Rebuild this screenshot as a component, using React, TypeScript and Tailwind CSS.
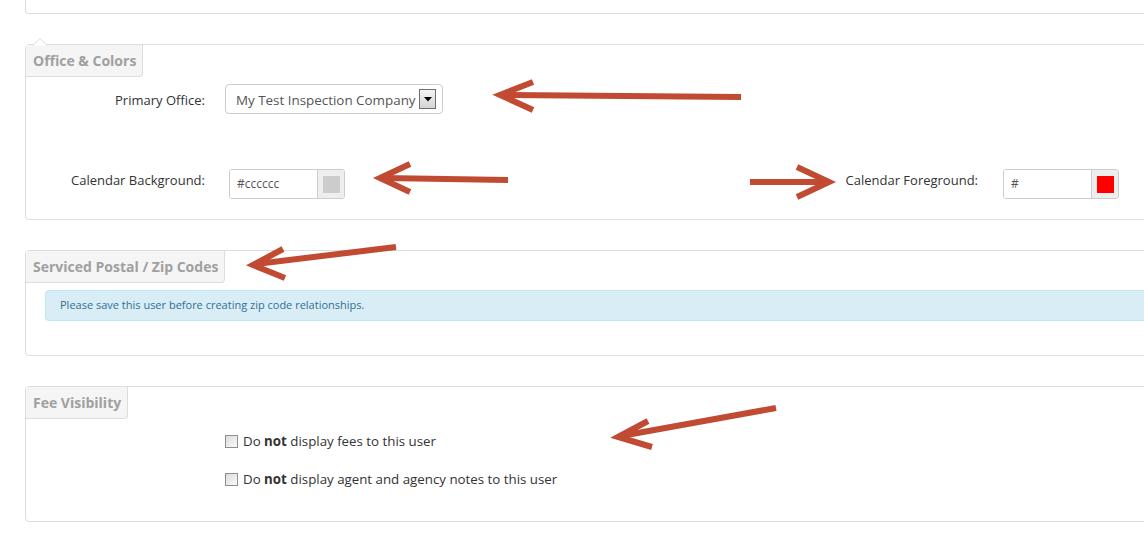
import React from "react";

function Tab(props: { title: string }) {
    return (
        <div className="inline-flex h-[32px] items-center bg-[#f5f5f5] border-r border-b border-[#dddddd] rounded-br-[4px] pl-[7px] pr-[6px] text-[14px] font-bold text-[#a0a0a0]">
            {props.title}
        </div>
    );
}

function ColorInput(props: { value: string; swatch: string }) {
    return (
        <div className="flex h-[30px] w-[116px] border border-[#cccccc] rounded-[3px] overflow-hidden">
            <div className="flex-1 flex items-center pl-[7px] text-[12px] text-[#555555] bg-white">{props.value}</div>
            <div className="w-[27px] border-l border-[#cccccc] bg-[#eeeeee] flex items-center justify-center">
                <span className={"block w-[17px] h-[17px] " + props.swatch}></span>
            </div>
        </div>
    );
}

function Check(props: { children: React.ReactNode }) {
    return (
        <div className="flex items-center ml-[199px] text-[13.3px] text-[#333333]">
            <span className="block w-[13px] h-[13px] border border-[#8e8f8f] bg-gradient-to-br from-[#dcdcdc] to-[#fbfbfb] mr-[5px]"></span>
            <span>{props.children}</span>
        </div>
    );
}

function Arrows() {
    const c = "#c14a33";
    return (
        <svg className="absolute left-0 top-0 pointer-events-none" width="1144" height="549">
            <g stroke={c} strokeWidth="6" fill="none" strokeLinecap="butt" strokeLinejoin="miter">
                <path d="M741 97 L503 95" />
                <path d="M533 82 L500 95 L533 110" />
                <path d="M508 180 L383 178" />
                <path d="M410 164 L380 178 L410 192" />
                <path d="M750 182 L827 182" />
                <path d="M797 167 L829 182 L797 197" />
                <path d="M396 247 L256 264" />
                <path d="M283 249 L253 265 L285 278" />
                <path d="M776 408 L621 436" />
                <path d="M648 421 L618 437 L652 447" />
            </g>
        </svg>
    );
}

export default function App() {
    return (
        <div className="relative w-[1144px] h-[549px] overflow-hidden bg-white" style={{ fontFamily: '"Open Sans", "Liberation Sans", sans-serif' }}>
            <div className="ml-[25px] w-[1200px] h-[14px] border-x border-b border-[#dddddd] rounded-b-[4px]"></div>

            {/* Office & Colors */}
            <div className="relative mt-[30px] ml-[25px] w-[1200px] h-[176px] border border-[#dddddd] rounded-[4px]">
                <svg className="absolute left-[7px] top-[-7px]" width="14" height="8">
                    <path d="M0 7.5 L7 0.5 L14 7.5" fill="white" stroke="#dddddd" />
                </svg>
                <Tab title="Office & Colors" />
                <div className="flex items-center mt-[7px] h-[30px]">
                    <div className="w-[179px] pt-[4px] text-right text-[13px] text-[#333333]">Primary Office:</div>
                    <div className="ml-[20px] flex items-center h-[30px] w-[218px] border border-[#cccccc] rounded-[4px] pl-[10px] pr-[6px] text-[13.4px] text-[#555555]">
                        <span className="flex-1 pt-[3px] whitespace-nowrap">My Test Inspection Company</span>
                        <span className="flex items-center justify-center w-[17px] h-[20px] border border-[#707070] bg-gradient-to-b from-[#f4f4f4] to-[#d4d4d4]">
                            <svg width="8" height="5"><path d="M0 0 L8 0 L4 4.5 Z" fill="#000" /></svg>
                        </span>
                    </div>
                </div>
                <div className="flex items-center mt-[55px] h-[30px]">
                    <div className="w-[179px] mb-[6px] text-right text-[13px] text-[#333333]">Calendar Background:</div>
                    <div className="ml-[24px]">
                        <ColorInput value="#cccccc" swatch="bg-[#cccccc]" />
                    </div>
                    <div className="ml-[453px] w-[180px] mb-[6px] text-right text-[13px] text-[#333333]">Calendar Foreground:</div>
                    <div className="ml-[25px]">
                        <ColorInput value="#" swatch="bg-[#ff0000]" />
                    </div>
                </div>
            </div>

            {/* Serviced Postal / Zip Codes */}
            <div className="mt-[30px] ml-[25px] w-[1200px] h-[106px] border border-[#dddddd] rounded-[4px]">
                <Tab title="Serviced Postal / Zip Codes" />
                <div className="mt-[7px] ml-[19px] h-[31px] flex items-center pl-[14px] bg-[#d9edf7] border border-[#bce8f1] rounded-[4px] text-[11px] text-[#31708f]">
                    Please save this user before creating zip code relationships.
                </div>
            </div>

            {/* Fee Visibility */}
            <div className="mt-[30px] ml-[25px] w-[1200px] h-[136px] border border-[#dddddd] rounded-[4px]">
                <Tab title="Fee Visibility" />
                <div className="mt-[14px] h-[17px] flex items-center">
                    <Check>Do <b>not</b> display fees to this user</Check>
                </div>
                <div className="mt-[21px] h-[17px] flex items-center">
                    <Check>Do <b>not</b> display agent and agency notes to this user</Check>
                </div>
            </div>

            <Arrows />
        </div>
    );
}
